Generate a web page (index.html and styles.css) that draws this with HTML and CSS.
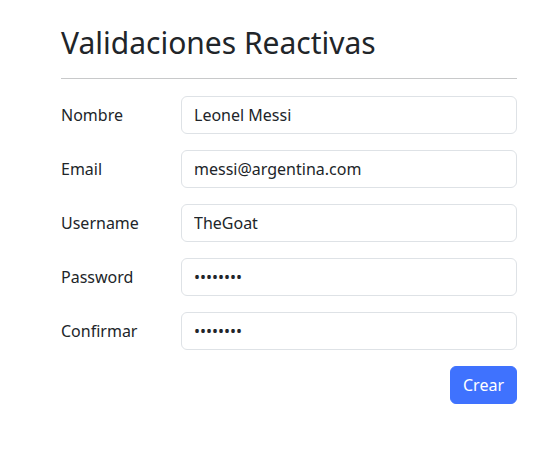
FILE: index.html
```html
<!DOCTYPE html>
<html lang="es">
<head>
<meta charset="utf-8">
<title>Validaciones Reactivas</title>
<link rel="stylesheet" href="styles.css">
</head>
<body>
<main class="page">
  <h1 class="title">Validaciones Reactivas</h1>
  <hr class="divider">
  <form class="form">
    <div class="row">
      <label class="label" for="nombre">Nombre</label>
      <input class="control" id="nombre" type="text" value="Leonel Messi">
    </div>
    <div class="row">
      <label class="label" for="email">Email</label>
      <input class="control" id="email" type="text" value="messi@argentina.com">
    </div>
    <div class="row">
      <label class="label" for="username">Username</label>
      <input class="control" id="username" type="text" value="TheGoat">
    </div>
    <div class="row">
      <label class="label" for="password">Password</label>
      <input class="control" id="password" type="password" value="12345678">
    </div>
    <div class="row">
      <label class="label" for="confirmar">Confirmar</label>
      <input class="control" id="confirmar" type="password" value="12345678">
    </div>
    <div class="actions">
      <button class="btn" type="button">Crear</button>
    </div>
  </form>
</main>
</body>
</html>
```
FILE: styles.css
```css
* { box-sizing: border-box; }
html, body { margin: 0; padding: 0; background: #fff; }
body {
  font-family: "Noto Sans", "Liberation Sans", sans-serif;
  font-size: 16px;
  line-height: 1.5;
  color: #212529;
}
.page {
  margin-left: 61px;
  width: 456px;
  padding-top: 25px;
}
.title {
  margin: 0;
  font-size: 30px;
  font-weight: 400;
  line-height: 36px;
}
.divider {
  margin: 17px 0 17px;
  border: 0;
  border-top: 1px solid #c8c9ca;
  height: 0;
}
.form { margin: 0; }
.row {
  display: flex;
  align-items: center;
  margin-bottom: 16px;
}
.label {
  width: 120px;
  flex: none;
}
.control {
  flex: 1;
  height: 38px;
  padding: 6px 12px;
  font-family: inherit;
  font-size: 16px;
  line-height: 1.5;
  color: #212529;
  background: #fff;
  border: 1px solid #dee2e6;
  border-radius: 6px;
  outline: none;
}
.actions {
  display: flex;
  justify-content: flex-end;
}
.btn {
  height: 38px;
  padding: 6px 12px;
  font-family: inherit;
  font-size: 16px;
  line-height: 1.5;
  color: #fff;
  background: #3f72fe;
  border: 1px solid #3f72fe;
  border-radius: 6px;
}
```
